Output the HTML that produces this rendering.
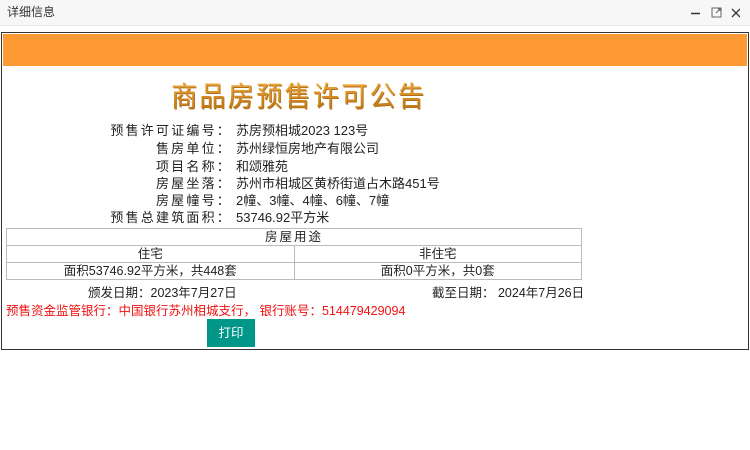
<!DOCTYPE html>
<html><head><meta charset="utf-8"><style>
*{margin:0;padding:0;box-sizing:border-box}
body{width:750px;height:450px;background:#fff;font-family:"Liberation Sans","Noto Sans CJK SC",sans-serif;font-size:12.5px;color:#222;position:relative;overflow:hidden}
.tb{position:absolute;left:0;top:0;width:750px;height:26px;background:#f7f7f7;border-bottom:1px solid #e6e6e6}
.tb .t{position:absolute;left:7px;top:3px;font-size:12px;color:#333}
.box{position:absolute;left:1px;top:32px;width:748px;height:318px;border:1px solid #333}
.band{position:absolute;left:1px;top:1px;right:1px;height:32px;background:#ff9933}
.title{position:absolute;left:171px;top:77px;font-size:28px;line-height:36px;font-weight:400;font-family:"Noto Sans CJK SC",sans-serif;background:linear-gradient(#f7b040,#b8700a);-webkit-background-clip:text;background-clip:text;-webkit-text-fill-color:transparent;filter:drop-shadow(1px 1px 0 #b07020);letter-spacing:2.5px;transform:scaleX(0.93);transform-origin:left}
.row{position:absolute;left:0;height:17px;line-height:17px;white-space:nowrap;font-size:13px}
.lb{position:absolute;right:518px;letter-spacing:2.2px;text-align:right}
.v{position:absolute;left:236px}
table{position:absolute;left:6px;top:228px;width:576px;border-collapse:collapse;font-size:12.5px}
td{border:1px solid #bbb;text-align:center;height:17px;line-height:15px;padding:0}
.d1{position:absolute;left:88px;top:282px;font-size:12.5px}
.d2{position:absolute;left:432px;top:282px;font-size:12.5px}
.red{position:absolute;left:6px;top:300px;color:#f01010;font-size:12.5px}
.btn{position:absolute;left:207px;top:319px;width:48px;height:28px;background:#009688;color:#fff;text-align:center;line-height:28px;font-size:12.5px}
</style></head><body>
<div class="tb"><span class="t">详细信息</span>
<svg style="position:absolute;left:690px;top:6px" width="50" height="14" viewBox="0 0 50 14"><path d="M1 7.5h9" stroke="#333" stroke-width="1.5"/><rect x="22" y="2" width="9" height="9" fill="none" stroke="#666"/><path d="M26 7l4-4M28 3h2v2" stroke="#666" fill="none"/><path d="M42 3l8 8M50 3l-8 8" stroke="#333" stroke-width="1.3"/></svg>
</div>
<div class="box"><div class="band"></div></div>
<div class="title">商品房预售许可公告</div>
<div class="row" style="top:122px;width:750px"><span class="lb">预售许可证编号：</span><span class="v">苏房预相城2023 123号</span></div>
<div class="row" style="top:140px;width:750px"><span class="lb">售房单位：</span><span class="v">苏州绿恒房地产有限公司</span></div>
<div class="row" style="top:158px;width:750px"><span class="lb">项目名称：</span><span class="v">和颂雅苑</span></div>
<div class="row" style="top:175px;width:750px"><span class="lb">房屋坐落：</span><span class="v">苏州市相城区黄桥街道占木路451号</span></div>
<div class="row" style="top:192px;width:750px"><span class="lb">房屋幢号：</span><span class="v">2幢、3幢、4幢、6幢、7幢</span></div>
<div class="row" style="top:209px;width:750px"><span class="lb">预售总建筑面积：</span><span class="v">53746.92平方米</span></div>
<table>
<tr><td colspan="2" style="letter-spacing:2px">房屋用途</td></tr>
<tr><td style="width:50%">住宅</td><td>非住宅</td></tr>
<tr><td>面积53746.92平方米，共448套</td><td>面积0平方米，共0套</td></tr>
</table>
<div class="d1">颁发日期：2023年7月27日</div>
<div class="d2">截至日期：&nbsp;2024年7月26日</div>
<div class="red">预售资金监管银行：中国银行苏州相城支行，&nbsp;银行账号：514479429094</div>
<div class="btn">打印</div>
</body></html>
